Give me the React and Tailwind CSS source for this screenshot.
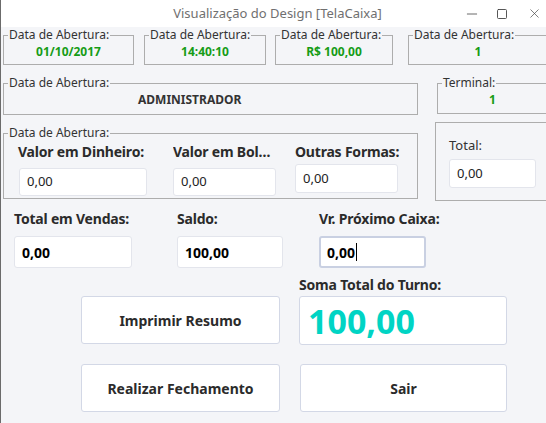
import { Minus, Square, X } from 'lucide-react';

const font = { fontFamily: '"Noto Sans", "Open Sans", sans-serif' };

function Group({ label, className = '', children }) {
  return (
    <fieldset className={`border border-[#adadad] ${className}`}>
      {label ? <legend className="ml-[4px] px-[1px] text-[12px] leading-[14px] text-[#333]">{label}</legend> : null}
      {children}
    </fieldset>
  );
}

function Field({ value, className = '', bold = false }) {
  return (
    <div className={`flex items-center rounded-[3px] border border-[#e3e5ec] bg-white px-[7px] text-[13px] text-[#222] ${bold ? 'font-bold text-[14px] text-black' : ''} ${className}`}>
      {value}
    </div>
  );
}

function Action({ children }) {
  return (
    <button className="flex h-[48px] w-full items-center justify-center rounded-[3px] border border-[#d3d8e6] bg-white text-[14px] font-bold text-[#2b2b2b]">
      {children}
    </button>
  );
}

const label = 'whitespace-nowrap text-[14px] font-bold leading-[20px] text-[#2b2b2b] tracking-[-0.2px]';

export default function App() {
  return (
    <div style={font} className="h-[423px] w-[546px] overflow-hidden border-l border-[#6b6b6b] bg-[#f4f5f8]">
      <div className="relative flex h-[27px] items-center justify-center bg-white text-[13px] text-[#707070]">
        <span className="ml-[8px]">Visualização do Design [TelaCaixa]</span>
        <div className="absolute right-0 top-0 flex h-[27px] items-center text-[#444]">
          <Minus size={16} strokeWidth={1.2} className="mr-[16px]" />
          <Square size={12} strokeWidth={1.8} className="mr-[19px]" />
          <X size={15} strokeWidth={1.1} className="mr-[4px]" />
        </div>
      </div>

      <div className="mt-[1px] flex w-[560px]">
        <Group label="Data de Abertura:" className="ml-[2px] h-[37px] w-[131px]">
          <div className="text-center text-[12px] font-bold leading-[20px] text-[#169c16]">01/10/2017</div>
        </Group>
        <Group label="Data de Abertura:" className="ml-[10px] h-[37px] w-[122px]">
          <div className="text-center text-[12px] font-bold leading-[20px] text-[#169c16]">14:40:10</div>
        </Group>
        <Group label="Data de Abertura:" className="ml-[9px] h-[37px] w-[118px]">
          <div className="text-center text-[12px] font-bold leading-[20px] text-[#169c16]">R$ 100,00</div>
        </Group>
        <Group label="Data de Abertura:" className="ml-[15px] h-[37px] w-[140px]">
          <div className="text-center text-[12px] font-bold leading-[20px] text-[#169c16]">1</div>
        </Group>
      </div>

      <div className="mt-[11px] flex w-[560px]">
        <Group label="Data de Abertura:" className="ml-[2px] h-[39px] w-[415px]">
          <div className="pl-[134px] text-[12px] font-bold leading-[20px] text-[#333]">ADMINISTRADOR</div>
        </Group>
        <Group label="Terminal:" className="ml-[19px] h-[38px] w-[111px]">
          <div className="text-center text-[12px] font-bold leading-[20px] text-[#169c16]">1</div>
        </Group>
      </div>

      <div className="mt-[7px] flex w-[560px] items-start">
        <Group label="Data de Abertura:" className="ml-[2px] mt-[4px] h-[73px] w-[415px]">
          <div className="flex">
            <div className="ml-[14px] w-[129px]">
              <div className={`mt-[2px] ${label}`}>Valor em Dinheiro:</div>
              <Field value="0,00" className="ml-[1px] mt-[6px] h-[28px] w-[128px]" />
            </div>
            <div className="ml-[26px] w-[103px]">
              <div className={`mt-[2px] truncate ${label}`}>Valor em Boleto:</div>
              <Field value="0,00" className="mt-[6px] h-[28px]" />
            </div>
            <div className="ml-[19px] w-[103px]">
              <div className={`mt-[2px] ${label}`}>Outras Formas:</div>
              <Field value="0,00" className="mt-[2px] h-[29px]" />
            </div>
          </div>
        </Group>
        <div className="ml-[17px] h-[79px] w-[120px] border border-[#adadad] pl-[13px] pt-[14px]">
          <div className="text-[13px] leading-[16px] text-[#333]">Total:</div>
          <Field value="0,00" className="mt-[6px] h-[29px] w-[87px]" />
        </div>
      </div>

      <div className="mt-[8px] flex">
        <div className="ml-[13px] w-[118px]">
          <div className={label}>Total em Vendas:</div>
          <Field value="0,00" bold className="mt-[7px] h-[32px]" />
        </div>
        <div className="ml-[45px] w-[106px]">
          <div className={label}>Saldo:</div>
          <Field value="100,00" bold className="mt-[7px] h-[32px]" />
        </div>
        <div className="ml-[36px] w-[107px]">
          <div className={label}>Vr. Próximo Caixa:</div>
          <div className="mt-[7px] flex h-[32px] items-center rounded-[3px] border-2 border-[#c9d0e2] bg-white px-[6px] text-[14px] font-bold text-black">
            0,00<span className="ml-[1px] h-[18px] w-px bg-black" />
          </div>
        </div>
      </div>

      <div className="ml-[80px] mt-[7px] grid w-[426px] grid-cols-[199px_208px] gap-x-[19px]">
        <div />
        <div className={label}>Soma Total do Turno:</div>
        <div className="mt-[1px]">
          <Action>Imprimir Resumo</Action>
        </div>
        <div className="mt-[1px] flex h-[49px] items-center rounded-[3px] border border-[#d3d8e6] bg-white pl-[8px] text-[34px] font-bold leading-none text-[#00d4c4]">
          100,00
        </div>
        <div className="mt-[19px]">
          <Action>Realizar Fechamento</Action>
        </div>
        <div className="ml-[1px] mt-[19px]">
          <Action>Sair</Action>
        </div>
      </div>
    </div>
  );
}
